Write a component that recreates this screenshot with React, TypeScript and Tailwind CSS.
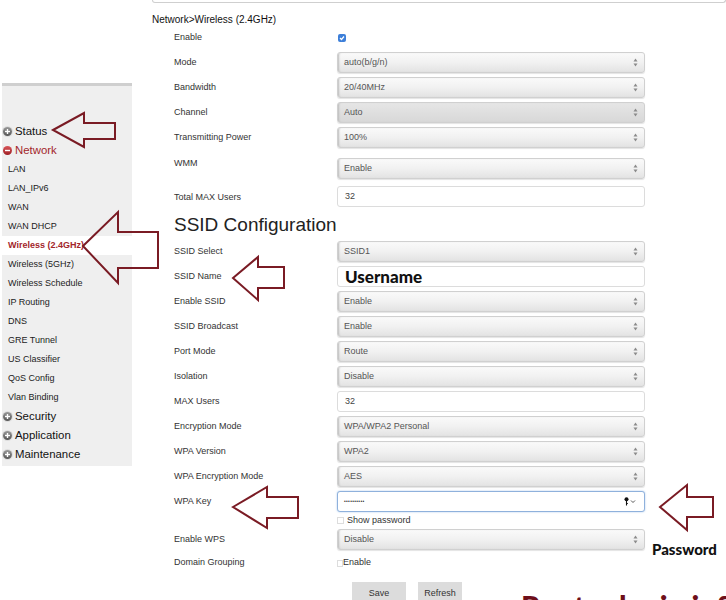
import React from "react";

type Row = {
  label: string;
  kind: "select" | "input" | "check" | "password" | "username";
  value?: string;
  dark?: boolean;
  rowClass?: string;
  labelClass?: string;
};

const topRows: Row[] = [
  { label: "Enable", kind: "check", rowClass: "h-[24px]" },
  { label: "Mode", kind: "select", value: "auto(b/g/n)" },
  { label: "Bandwidth", kind: "select", value: "20/40MHz" },
  { label: "Channel", kind: "select", value: "Auto", dark: true },
  { label: "Transmitting Power", kind: "select", value: "100%" },
  { label: "WMM", kind: "select", value: "Enable", rowClass: "h-[25px] mt-[6px]", labelClass: "-mt-[9px]" },
  { label: "Total MAX Users", kind: "input", value: "32", rowClass: "h-[25px] mt-[3px]", labelClass: "mt-[2px]" },
];

const ssidRows: Row[] = [
  { label: "SSID Select", kind: "select", value: "SSID1" },
  { label: "SSID Name", kind: "username" },
  { label: "Enable SSID", kind: "select", value: "Enable" },
  { label: "SSID Broadcast", kind: "select", value: "Enable" },
  { label: "Port Mode", kind: "select", value: "Route" },
  { label: "Isolation", kind: "select", value: "Disable" },
  { label: "MAX Users", kind: "input", value: "32" },
  { label: "Encryption Mode", kind: "select", value: "WPA/WPA2 Personal" },
  { label: "WPA Version", kind: "select", value: "WPA2" },
  { label: "WPA Encryption Mode", kind: "select", value: "AES" },
  { label: "WPA Key", kind: "password" },
];

const menu = [
  { name: "Status", type: "top" },
  { name: "Network", type: "open" },
  { name: "LAN", type: "sub" },
  { name: "LAN_IPv6", type: "sub" },
  { name: "WAN", type: "sub" },
  { name: "WAN DHCP", type: "sub" },
  { name: "Wireless (2.4GHz)", type: "active" },
  { name: "Wireless (5GHz)", type: "sub" },
  { name: "Wireless Schedule", type: "sub" },
  { name: "IP Routing", type: "sub" },
  { name: "DNS", type: "sub" },
  { name: "GRE Tunnel", type: "sub" },
  { name: "US Classifier", type: "sub" },
  { name: "QoS Config", type: "sub" },
  { name: "Vlan Binding", type: "sub" },
  { name: "Security", type: "top" },
  { name: "Application", type: "top" },
  { name: "Maintenance", type: "top" },
];

// annotation arrows: tip x/y, head x, head top, head bottom, shaft top, shaft bottom, tail x
const arrows = [
  [53, 130, 84, 113, 147, 123, 139, 115],
  [83, 246, 118, 212, 283, 232, 268, 158],
  [233, 278, 258, 257, 300, 267, 288, 284],
  [233, 507, 267, 487, 528, 497, 518, 298],
  [660, 507, 687, 485, 530, 497, 517, 713],
];

function Updown() {
  return (
    <svg width="5" height="9" viewBox="0 0 5 9" className="shrink-0">
      <path d="M2.5 0.5 L4.5 3.5 L0.5 3.5 Z" fill="#8a8a8a" />
      <path d="M2.5 8.5 L4.5 5.5 L0.5 5.5 Z" fill="#8a8a8a" />
    </svg>
  );
}

function NodeIcon({ open }: { open?: boolean }) {
  return (
    <span
      className={
        "w-[9px] h-[9px] rounded-full flex items-center justify-center shrink-0 mr-[3px] " +
        (open
          ? "bg-gradient-to-b from-[#d9555a] to-[#9e1e24]"
          : "bg-gradient-to-b from-[#9a9a9a] to-[#555] shadow-[0_0_0_1px_#ddd]")
      }
    >
      <svg width="7" height="7" viewBox="0 0 7 7">
        <path d="M1 3.5 H6" stroke="#fff" strokeWidth="1.4" />
        {!open && <path d="M3.5 1 V6" stroke="#fff" strokeWidth="1.4" />}
      </svg>
    </span>
  );
}

function Control({ row }: { row: Row }) {
  const base = "w-[308px] h-[21px] rounded-[3px] flex items-center px-[6px] text-[9px]";
  if (row.kind === "check") {
    return (
      <span className="ml-[1px] w-[8px] h-[8px] rounded-[2px] bg-[#3d7fd9] flex items-center justify-center">
        <svg width="6" height="6" viewBox="0 0 6 6">
          <path d="M1 3 L2.5 4.5 L5 1.5" stroke="#fff" strokeWidth="1.2" fill="none" />
        </svg>
      </span>
    );
  }
  if (row.kind === "input") {
    return (
      <div className={base + " bg-white border border-[#dcdcdc] text-[#444]"}>
        <span className="pl-[1px]">{row.value}</span>
      </div>
    );
  }
  if (row.kind === "username") {
    return (
      <div className={base + " bg-white border border-[#dcdcdc] pl-[7px]"}>
        <span className="font-['Lato',sans-serif] font-black text-[17px] text-[#111] leading-none">Username</span>
      </div>
    );
  }
  if (row.kind === "password") {
    return (
      <div className={base + " bg-white border border-[#8fb1dc] shadow-[0_0_2px_#a9c6ea] justify-between"}>
        <span className="text-[5px] tracking-[0.3px] text-[#333]">••••••••••</span>
        <span className="flex items-center gap-[1px] mr-[2px]">
          <svg width="5" height="9" viewBox="0 0 5 9">
            <circle cx="2.5" cy="2.3" r="2" fill="#111" />
            <path d="M2.5 4 V8.5 M2.5 6.5 H3.8" stroke="#111" strokeWidth="1.1" />
          </svg>
          <svg width="6" height="5" viewBox="0 0 6 5">
            <path d="M1 1.5 L3 3.5 L5 1.5" stroke="#444" strokeWidth="0.9" fill="none" />
          </svg>
        </span>
      </div>
    );
  }
  return (
    <div
      className={
        base +
        " justify-between border border-[#d0d0d0] text-[#555] shadow-[inset_2px_0_2px_-1px_#bbb,0_1px_1px_#e4e4e4] " +
        (row.dark
          ? "bg-gradient-to-b from-[#e6e6e6] to-[#d8d8d8]"
          : "bg-gradient-to-b from-[#fafafa] via-[#f1f1f1] to-[#e3e3e3]")
      }
    >
      <span>{row.value}</span>
      <Updown />
    </div>
  );
}

function FormRow({ row }: { row: Row }) {
  return (
    <div className={"flex items-center " + (row.rowClass ?? "h-[25px]")}>
      <div className={"w-[163px] text-[9px] text-[#333] " + (row.labelClass ?? "")}>{row.label}</div>
      <Control row={row} />
    </div>
  );
}

export default function App() {
  return (
    <div className="relative w-[726px] h-[600px] overflow-hidden bg-white font-['Liberation_Sans',Arial,sans-serif] text-[#333]">
      <div className="flex">
        <aside className="w-[152px] shrink-0 pt-[83px] pl-[2px]">
          <div className="w-[130px] bg-[#efefef] border-t-[3px] border-[#cfcfcf] pt-[36px] pb-[2px]">
            {menu.map((m) => {
              if (m.type === "top" || m.type === "open") {
                return (
                  <div key={m.name} className="h-[19px] flex items-center pl-[1px]">
                    <NodeIcon open={m.type === "open"} />
                    <span className={"text-[11.4px] " + (m.type === "open" ? "text-[#a3262b]" : "text-[#111]")}>
                      {m.name}
                    </span>
                  </div>
                );
              }
              return (
                <div
                  key={m.name}
                  className={
                    "h-[19px] flex items-center pl-[6px] text-[9px] " +
                    (m.type === "active" ? "bg-white text-[#a3262b] font-bold" : "text-[#222]")
                  }
                >
                  {m.name}
                </div>
              );
            })}
          </div>
        </aside>

        <main className="flex-1">
          <div className="h-[3px] border border-t-0 border-[#cfcfcf] rounded-b-[4px]" />
          <div className="mt-[11px] h-[12px] leading-[12px] text-[10px] text-[#111]">Network&gt;Wireless (2.4GHz)</div>

          <div className="pl-[22px]">
            {topRows.map((r) => (
              <FormRow key={r.label} row={r} />
            ))}

            <div className="h-[30px] flex items-center text-[19px] text-[#222] leading-none">SSID Configuration</div>

            {ssidRows.map((r) => (
              <FormRow key={r.label} row={r} />
            ))}

            <div className="h-[13px] flex items-center pl-[163px] text-[9px] text-[#333]">
              <span className="w-[7px] h-[7px] border border-[#ddd] bg-white mr-[3px]" />
              Show password
            </div>

            <FormRow row={{ label: "Enable WPS", kind: "select", value: "Disable" }} />

            <div className="h-[22px] flex items-center text-[9px]">
              <div className="w-[163px]">Domain Grouping</div>
              <span className="w-[6px] h-[7px] border border-[#ddd] bg-white" />
              <span>Enable</span>
            </div>

            <div className="mt-[8px] pl-[178px] flex gap-[12px]">
              <div className="w-[54px] h-[24px] bg-[#dcdcdc] flex items-center justify-center text-[9px] text-[#333]">Save</div>
              <div className="w-[44px] h-[24px] bg-[#dcdcdc] flex items-center justify-center text-[9px] text-[#333]">Refresh</div>
            </div>
          </div>
        </main>
      </div>

      <div className="absolute left-[652px] top-[538px] font-['Lato',sans-serif] font-black text-[15px] text-[#111]">Password</div>
      <div className="absolute left-[521px] top-[591px] font-['Lato',sans-serif] font-black text-[30px] leading-none text-[#6e0f1a] whitespace-nowrap">
        Router login info
      </div>

      <svg className="absolute inset-0 pointer-events-none" width="726" height="600">
        {arrows.map((a, i) => {
          const [tx, ty, hx, ht, hb, st, sb, ex] = a;
          const pts = `${tx},${ty} ${hx},${ht} ${hx},${st} ${ex},${st} ${ex},${sb} ${hx},${sb} ${hx},${hb}`;
          return <polygon key={i} points={pts} fill="none" stroke="#7a1b24" strokeWidth="2" strokeLinejoin="miter" />;
        })}
      </svg>
    </div>
  );
}
